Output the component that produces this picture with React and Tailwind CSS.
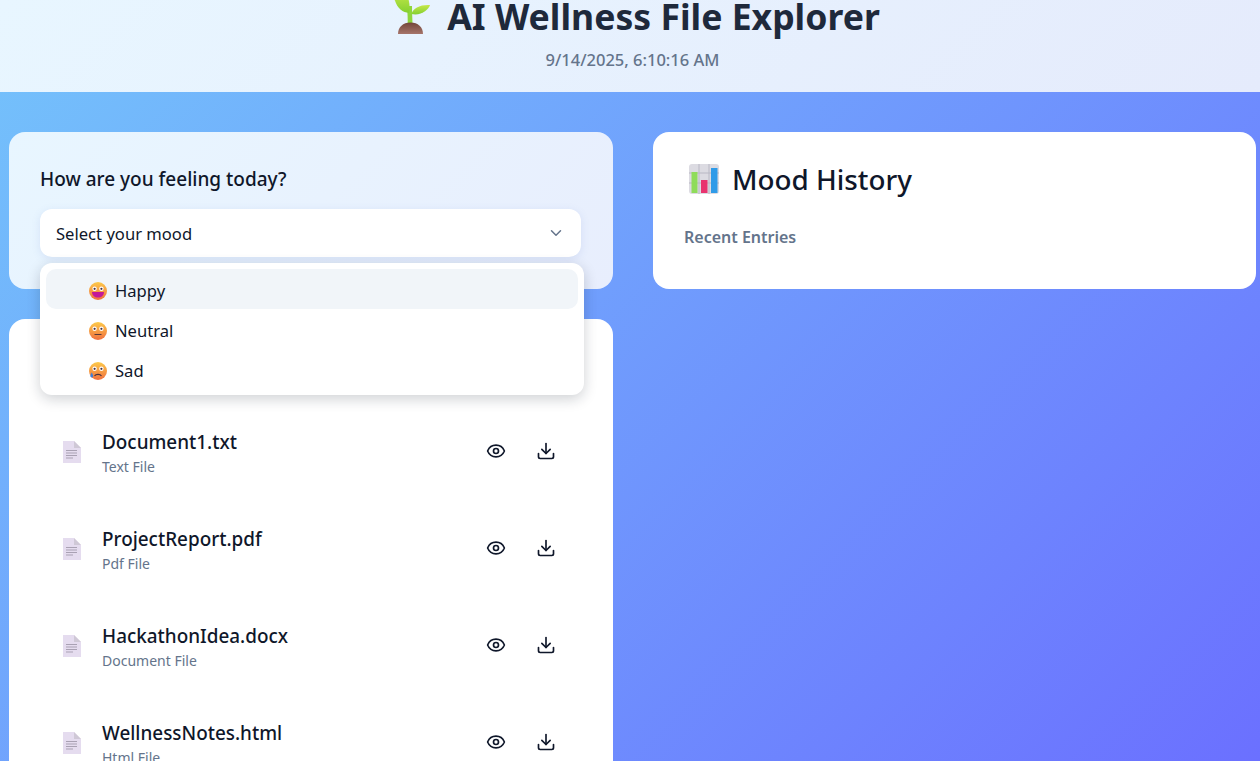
import { ChevronDown, Eye, Download } from 'lucide-react';

const files = [
    { name: 'Document1.txt', type: 'Text File' },
    { name: 'ProjectReport.pdf', type: 'Pdf File' },
    { name: 'HackathonIdea.docx', type: 'Document File' },
    { name: 'WellnessNotes.html', type: 'Html File' },
];

const Sprout = () => (
    <svg width="44" height="44" viewBox="0 0 44 44" className="shrink-0">
        <defs>
            <linearGradient id="leaf" x1="0" y1="0" x2="0" y2="1">
                <stop offset="0" stopColor="#c6e84a" />
                <stop offset="1" stopColor="#84d030" />
            </linearGradient>
            <linearGradient id="soil" x1="0" y1="0" x2="0" y2="1">
                <stop offset="0" stopColor="#74463a" />
                <stop offset="1" stopColor="#a5746a" />
            </linearGradient>
        </defs>
        <path d="M19.500 32 C20 26 19.500 20 19 12 L24 12 C24 20 24.500 26 24.500 32 Z" fill="#8fd63c" />
        <path d="M21 19 C13 18 7 13 5 -2 L18 -2 C21 5 22.500 12 21 19 Z" fill="url(#leaf)" />
        <path d="M23.500 20 C25 14 32 10.500 42 11 C40.500 16 33 22 23.500 20 Z" fill="url(#leaf)" />
        <path d="M10 40 C10 33 15 28.500 22.500 28.500 C30 28.500 35 33 35 40 Z" fill="url(#soil)" />
    </svg>
);

const Face = ({ kind }) => (
    <svg width="18" height="18" viewBox="0 0 18 18" className="shrink-0 mt-[3px]">
        <defs>
            <linearGradient id={`face-${kind}`} x1="0" y1="0" x2="0" y2="1">
                <stop offset="0" stopColor="#fcc94a" />
                <stop offset="1" stopColor="#f0703f" />
            </linearGradient>
        </defs>
        <circle cx="9" cy="9" r="9" fill={`url(#face-${kind})`} />
        <circle cx="5.600" cy="6.800" r="2.200" fill="#fff" />
        <circle cx="12.400" cy="6.800" r="2.200" fill="#fff" />
        <circle cx="5.600" cy="6.800" r="1.100" fill="#4a3340" />
        <circle cx="12.400" cy="6.800" r="1.100" fill="#4a3340" />
        {kind === 'happy' && <path d="M3 10 H15 C15 13.500 12.500 15.500 9 15.500 C5.500 15.500 3 13.500 3 10 Z" fill="#c2189a" />}
        {kind === 'neutral' && <rect x="5.500" y="12" width="7" height="1" fill="#5a3a3a" />}
        {kind === 'sad' && (
            <>
                <path d="M5.500 14 C7 11.800 11 11.800 12.500 14" stroke="#4a3340" strokeWidth="1.200" fill="none" />
                <path d="M2.800 10.500 C1.500 12.800 1 13.800 1.500 14.800 C2.200 15.800 4 15.500 4.100 14.200 C4.200 13.200 3.500 11.800 2.800 10.500 Z" fill="#3f7fd8" />
            </>
        )}
    </svg>
);

const BarChart = () => (
    <svg width="32" height="32" viewBox="0 0 32 32" className="shrink-0">
        <rect x="1" y="1" width="30" height="30" rx="3" fill="#dcdbe2" />
        <path d="M11 1 V31 M21 1 V31 M1 10 H31 M1 20 H31" stroke="#b9b8c4" strokeWidth="1" />
        <rect x="3.500" y="9" width="6" height="21" fill="#8fdc5a" />
        <rect x="13" y="17" width="6.500" height="13" fill="#e8336f" />
        <rect x="23" y="5" width="6.500" height="25" fill="#2f9be8" />
    </svg>
);

const FileIcon = () => (
    <svg width="18" height="22" viewBox="0 0 18 22" className="shrink-0 mt-[2px]">
        <path d="M0 0 H11 L18 7 V22 H0 Z" fill="#e5dcef" />
        <path d="M11 0 L18 7 H11 Z" fill="#cfc8d6" />
        <path d="M3 9.500 H14 M3 12 H14 M3 14.500 H14 M3 17 H10" stroke="#a9a1b3" strokeWidth="1" />
    </svg>
);

const MoodOption = ({ kind, label, active }) => (
    <div className={`flex items-center gap-2 h-10 pl-[43px] rounded-[10px] text-[16.6px] text-[#0f172a] ${active ? 'bg-[#f1f5f9]' : ''}`}>
        <Face kind={kind} />
        <span className="pt-[4px]">{label}</span>
    </div>
);

const FileRow = ({ name, type }) => (
    <div className="h-[97px] flex items-center pl-[23px] pr-[26px]">
        <FileIcon />
        <div className="ml-[21px] flex-1 pt-[4px]">
            <div className="text-[18.9px] leading-[26px] font-medium text-[#0f172a]">{name}</div>
            <div className="text-[14px] leading-[20px] mt-[2px] text-[#64748b]">{type}</div>
        </div>
        <Eye size={20} strokeWidth={2} className="text-[#0f172a] mr-[30px]" />
        <Download size={20} strokeWidth={2} className="text-[#0f172a]" />
    </div>
);

export default function App() {
    return (
        <div className="h-[761px] overflow-hidden bg-[linear-gradient(135deg,#74c3fb_0%,#6b70ff_100%)] font-['Noto_Sans','Open_Sans',sans-serif]">
            <header className="h-[92px] bg-[linear-gradient(135deg,#e8f6ff,#e5ebfc)] flex flex-col items-center overflow-hidden">
                <div className="flex items-center gap-[15px] -mt-[10px] h-[52px] ml-2">
                    <Sprout />
                    <h1 className="text-[35.6px] leading-[52px] font-bold text-[#1e293b]">AI Wellness File Explorer</h1>
                </div>
                <p className="mt-[6px] ml-[5px] text-[16.5px] leading-6 font-medium text-[#64748b]">9/14/2025, 6:10:16 AM</p>
            </header>

            <main className="flex gap-10 pt-10 pl-[9px] pr-1">
                <section className="w-[604px] shrink-0 flex flex-col gap-[30px]">
                    <div className="relative h-[157px] rounded-2xl bg-[linear-gradient(135deg,#e8f6ff,#e8eefd)] pt-[32px] pl-[31px] pr-[32px]">
                        <label className="block text-[19px] leading-[30px] font-medium text-[#0f172a]">How are you feeling today?</label>
                        <div className="mt-[15px] h-12 rounded-xl bg-white shadow-[0_2px_8px_rgba(100,130,200,0.15)] flex items-center justify-between pl-[16px] pr-[16px] text-[16.6px] text-[#0f172a]">
                            <span className="pt-[2px]">Select your mood</span>
                            <ChevronDown size={18} className="text-[#64748b]" />
                        </div>
                        <div className="absolute z-10 left-[31px] top-[131px] w-[544px] bg-white rounded-xl p-[6px] shadow-[0_4px_14px_rgba(15,23,42,0.2)]">
                            <MoodOption kind="happy" label="Happy" active />
                            <MoodOption kind="neutral" label="Neutral" />
                            <MoodOption kind="sad" label="Sad" />
                        </div>
                    </div>
                    <div className="rounded-2xl bg-white pt-[83px] px-[31px] pb-6">
                        {files.map((f) => (
                            <FileRow key={f.name} name={f.name} type={f.type} />
                        ))}
                    </div>
                </section>

                <section className="flex-1 h-[157px] rounded-2xl bg-white pt-[29px] px-[31px]">
                    <div className="flex items-center gap-[12px] pl-[4px]">
                        <BarChart />
                        <h2 className="text-[27.8px] leading-[36px] font-medium text-[#0f172a]">Mood History</h2>
                    </div>
                    <p className="mt-[28px] text-[16px] leading-6 font-semibold text-[#64748b]">Recent Entries</p>
                </section>
            </main>
        </div>
    );
}
